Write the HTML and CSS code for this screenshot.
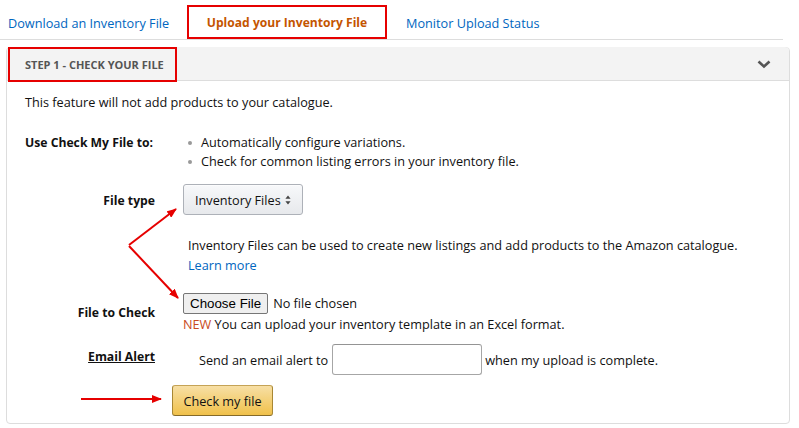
FILE: index.html
```html
<!DOCTYPE html>
<html>
<head>
<meta charset="utf-8">
<link rel="stylesheet" href="styles.css">
</head>
<body>
<div class="page">
  <nav class="tabs">
    <a class="tab tab-first">Download an Inventory File</a>
    <a class="tab tab-active">Upload your Inventory File</a>
    <a class="tab">Monitor Upload Status</a>
  </nav>

  <section class="panel">
    <header class="panel-head">
      <span class="step-title">STEP 1 - CHECK YOUR FILE</span>
      <svg class="chevron" width="14" height="9" viewBox="0 0 14 9"><path d="M1.5 1.5 L7 6.5 L12.5 1.5" fill="none" stroke="#555" stroke-width="2.6"/></svg>
    </header>
    <div class="panel-body">
      <p class="intro">This feature will not add products to your catalogue.</p>

      <div class="row row-use">
        <div class="label">Use Check My File to:</div>
        <ul class="bullets">
          <li>Automatically configure variations.</li>
          <li>Check for common listing errors in your inventory file.</li>
        </ul>
      </div>

      <div class="row row-type">
        <div class="label label-right label-type">File type</div>
        <div class="field">
          <span class="select">Inventory Files <svg class="updown" width="6" height="10" viewBox="0 0 6 10"><path d="M3 0.5 L5.6 3.8 L0.4 3.8 Z M3 9.5 L5.6 6.2 L0.4 6.2 Z" fill="#444"/></svg></span>
        </div>
      </div>

      <div class="type-help">
        <div>Inventory Files can be used to create new listings and add products to the Amazon catalogue.</div>
        <a class="link">Learn more</a>
      </div>

      <div class="row row-file">
        <div class="label label-right label-file">File to Check</div>
        <div class="field">
          <div class="file-line"><span class="file-btn">Choose File</span><span class="file-none">No file chosen</span></div>
          <div class="file-note"><span class="new">NEW</span> You can upload your inventory template in an Excel format.</div>
        </div>
      </div>

      <div class="row row-email">
        <div class="label label-right label-email"><span class="underline">Email Alert</span></div>
        <div class="field email-field">
          <span>Send an email alert to</span>
          <span class="email-input"></span>
          <span>when my upload is complete.</span>
        </div>
      </div>

      <div class="submit-row">
        <span class="check-btn">Check my file</span>
      </div>
    </div>
  </section>

  <svg class="annot" width="799" height="428" viewBox="0 0 799 428">
    <defs>
      <marker id="ah" markerWidth="10" markerHeight="8" refX="9" refY="4" orient="auto" markerUnits="userSpaceOnUse">
        <path d="M0 0 L10 4 L0 8 Z" fill="#e60000"/>
      </marker>
    </defs>
    <g stroke="#e60000" stroke-width="2" fill="none">
      <path d="M129 245 L176 209" marker-end="url(#ah)"/>
      <path d="M129 246 L178 298" marker-end="url(#ah)"/>
      <path d="M81 399 L161 399" marker-end="url(#ah)"/>
    </g>
  </svg>
</div>
</body>
</html>
```
FILE: styles.css
```css
* { box-sizing: border-box; }
html, body { margin: 0; padding: 0; background: #fff; }
body {
  font-family: "Open Sans", "Liberation Sans", sans-serif;
  font-size: 12.7px;
  color: #111;
  width: 799px;
  height: 428px;
  overflow: hidden;
}
.page { position: relative; width: 799px; height: 428px; }

.tabs {
  display: flex;
  align-items: flex-end;
  width: 783px;
  height: 40px;
  border-bottom: 1px solid #ddd;
  padding-top: 5px;
}
.tab {
  display: flex;
  align-items: center;
  height: 34px;
  color: #0066c0;
  white-space: nowrap;
  padding-top: 1px;
}
.tab-first { padding-left: 8px; width: 187px; }
.tab-active {
  width: 200px;
  justify-content: center;
  color: #c45500;
  font-weight: 700;
  font-size: 12.1px;
  border: 2px solid #e60000;
  height: 34px;
  padding-top: 0;
}
.tabs .tab:last-child { padding-left: 19px; }

.panel {
  margin: 7px 9px 0 6px;
  border: 1px solid #ddd;
  border-radius: 4px;
  height: 377px;
}
.panel-head {
  display: flex;
  align-items: center;
  justify-content: space-between;
  height: 34px;
  margin-top: -1px;
  background: #f3f3f3;
  border-bottom: 1px solid #ddd;
  border-radius: 4px 4px 0 0;
}
.step-title {
  display: flex;
  align-items: center;
  height: 35px;
  margin-left: 1px;
  margin-top: 1px;
  padding: 0 11px 0 15px;
  border: 2px solid #e60000;
  font-size: 11px;
  font-weight: 700;
  color: #555;
}
.chevron { margin-right: 18px; margin-top: 1px; }

.panel-body { padding: 12px 18px 0 18px; }
.intro { margin: 0; line-height: 19px; }

.row { display: grid; grid-template-columns: 130px 1fr; column-gap: 28px; }
.label { font-weight: 700; font-size: 12.2px; }
.label-right { text-align: right; }

.row-use { margin-top: 21px; line-height: 19px; }
.row-use .label { white-space: nowrap; }
.bullets { list-style: none; margin: 0; padding: 0 0 0 18px; }
.bullets li { position: relative; }
.bullets li::before {
  content: "";
  position: absolute;
  left: -13px; top: 8px;
  width: 4px; height: 4px;
  border-radius: 50%;
  background: #999;
}

.row-type { margin-top: 13px; align-items: center; }
.label-type { padding-top: 2px; }
.select {
  display: inline-flex;
  align-items: center;
  justify-content: space-between;
  width: 120px;
  height: 31px;
  padding: 0 11px 0 11px;
  border: 1px solid #adb1b8;
  border-radius: 3px;
  background: linear-gradient(#f7f8fa, #e7e9ec);
  box-shadow: 0 1px 0 rgba(255,255,255,0.6) inset;
}
.updown { display: block; }

.type-help { margin: 20px 0 0 163px; line-height: 20px; }
.link { color: #0066c0; }

.row-file { margin-top: 18px; }
.label-file { padding-top: 11px; }
.file-line { display: flex; align-items: center; gap: 5px; height: 20px; }
.file-btn {
  font-family: "Liberation Sans", Arial, sans-serif;
  font-size: 13.33px;
  color: #000;
  height: 21px;
  line-height: 19px;
  padding: 0 6px;
  border: 1px solid #767676;
  border-radius: 2px;
  background: #efefef;
}
.file-note { margin-top: 1px; line-height: 20px; }
.new { color: #c94b22; }

.row-email { margin-top: 12px; }
.label-email { padding-top: 2px; }
.underline { text-decoration: underline; }
.email-field { display: flex; align-items: center; padding-left: 16px; margin-top: -2px; }
.email-input {
  display: inline-block;
  width: 150px;
  height: 31px;
  margin: 0 3px 0 4px;
  border: 1px solid #a6a6a6;
  border-top-color: #949494;
  border-radius: 3px;
  background: #fff;
}

.submit-row { margin: 10px 0 0 147px; }
.check-btn {
  display: inline-flex;
  align-items: center;
  justify-content: center;
  width: 101px;
  height: 31px;
  border: 1px solid #a88734;
  border-color: #c5a356 #a88734 #846a29;
  border-radius: 3px;
  background: linear-gradient(#f7dfa5, #f0c14b);
  color: #111;
}

.annot { position: absolute; left: 0; top: 0; pointer-events: none; }
```
